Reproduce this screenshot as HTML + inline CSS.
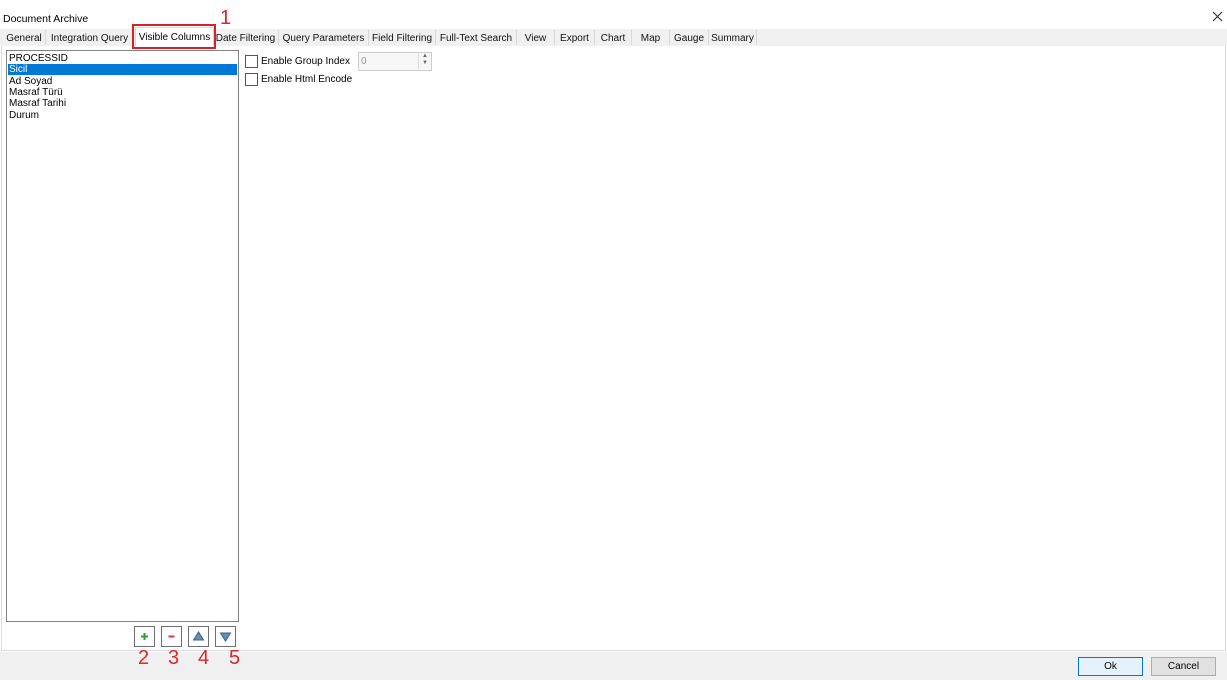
<!DOCTYPE html>
<html><head><meta charset="utf-8"><style>
body{margin:0;width:1227px;height:680px;background:#fff;font-family:"Liberation Sans",sans-serif;font-size:10px;color:#000;position:relative;overflow:hidden}
.a{position:absolute}
.tabs{left:0;top:29px;width:1227px;height:17px;background:#f0f0f0}
.tab{position:absolute;top:30px;height:15px;line-height:17px;border-right:1px solid #d9d9d9;text-align:center;font-size:10px;color:#111}
.panel{left:1px;top:46px;width:1223px;height:604px;border:1px solid #dcdcdc;border-top:none;background:#fff}
.bottom{left:0;top:652px;width:1227px;height:28px;background:#f0f0f0}
.list{left:6px;top:50px;width:231px;height:570px;border:1px solid #828282;background:#fff}
.row{position:absolute;left:2px;height:11px;line-height:11px;font-size:10px}
.btn{position:absolute;top:626px;width:19px;height:19px;border:1px solid #707070;background:#fdfdfd}
.num{position:absolute;top:647px;color:#e0242c;font-size:20px;line-height:22px}
.cb{position:absolute;width:11px;height:11px;border:1px solid #555;background:#fff}
</style></head><body>
<div class="a" style="left:3px;top:13px;font-size:10.5px">Document Archive</div>
<svg class="a" style="left:1212px;top:11px" width="11" height="11"><path d="M1 1L10 10M10 1L1 10" stroke="#333" stroke-width="1.2"/></svg>
<div class="a tabs"></div>
<div class="tab" style="left:3px;width:42px">General</div>
<div class="tab" style="left:46px;width:87px">Integration Query</div>
<div class="a" style="left:135px;top:27px;width:77px;height:20px;background:#fff;border:1px solid #d9d9d9;border-bottom:none;text-align:center;line-height:19px">Visible Columns</div>
<div class="tab" style="left:213px;width:65px">Date Filtering</div>
<div class="tab" style="left:279px;width:89px">Query Parameters</div>
<div class="tab" style="left:369px;width:66px">Field Filtering</div>
<div class="tab" style="left:436px;width:80px">Full-Text Search</div>
<div class="tab" style="left:517px;width:37px">View</div>
<div class="tab" style="left:555px;width:39px">Export</div>
<div class="tab" style="left:595px;width:36px">Chart</div>
<div class="tab" style="left:632px;width:37px">Map</div>
<div class="tab" style="left:670px;width:38px">Gauge</div>
<div class="tab" style="left:709px;width:47px">Summary</div>
<div class="a panel"></div>
<div class="a" style="left:132px;top:24px;width:80px;height:21px;border:2px solid #d3222a"></div>
<div class="a" style="left:220px;top:7px;color:#e0242c;font-size:20px;line-height:22px">1</div>
<div class="a list">
<div class="row" style="top:2px">PROCESSID</div>
<div class="row" style="top:13px;left:1px;width:228px;background:#0078d7;color:#fff;padding-left:1px">Sicil</div>
<div class="row" style="top:25px">Ad Soyad</div>
<div class="row" style="top:36px">Masraf Türü</div>
<div class="row" style="top:47px">Masraf Tarihi</div>
<div class="row" style="top:59px">Durum</div>
</div>
<div class="cb" style="left:245px;top:55px"></div>
<div class="a" style="left:261px;top:56px">Enable Group Index</div>
<div class="cb" style="left:245px;top:73px"></div>
<div class="a" style="left:261px;top:74px">Enable Html Encode</div>
<div class="a" style="left:358px;top:52px;width:72px;height:17px;border:1px solid #ccc;background:#f7f7f7;color:#999;line-height:17px;text-indent:2px">0</div>
<div class="a" style="left:418px;top:53px;width:12px;height:16px;border-left:1px solid #ddd;font-size:6px;color:#666;text-align:center;line-height:7px">▲<br>▼</div>
<div class="btn" style="left:134px"><svg width="19" height="19"><path d="M9.5 6v7M6 9.5h7" stroke="#3a9a3a" stroke-width="2"/></svg></div>
<div class="btn" style="left:161px"><svg width="19" height="19"><path d="M6.5 9.5h6" stroke="#d9363e" stroke-width="2"/></svg></div>
<div class="btn" style="left:188px"><svg width="19" height="19"><path d="M4.5 13L9.5 5L14.5 13Z" fill="#6a8fb0" stroke="#3d5f80"/></svg></div>
<div class="btn" style="left:215px"><svg width="19" height="19"><path d="M4.5 6L9.5 14L14.5 6Z" fill="#6a8fb0" stroke="#3d5f80"/></svg></div>
<div class="a bottom"></div>
<div class="num" style="left:138px">2</div>
<div class="num" style="left:168px">3</div>
<div class="num" style="left:198px">4</div>
<div class="num" style="left:229px">5</div>
<div class="a" style="left:1078px;top:657px;width:63px;height:17px;border:1px solid #0078d7;background:#e5f1fb;text-align:center;line-height:17px">Ok</div>
<div class="a" style="left:1151px;top:657px;width:63px;height:17px;border:1px solid #adadad;background:#e1e1e1;text-align:center;line-height:17px">Cancel</div>
</body></html>
